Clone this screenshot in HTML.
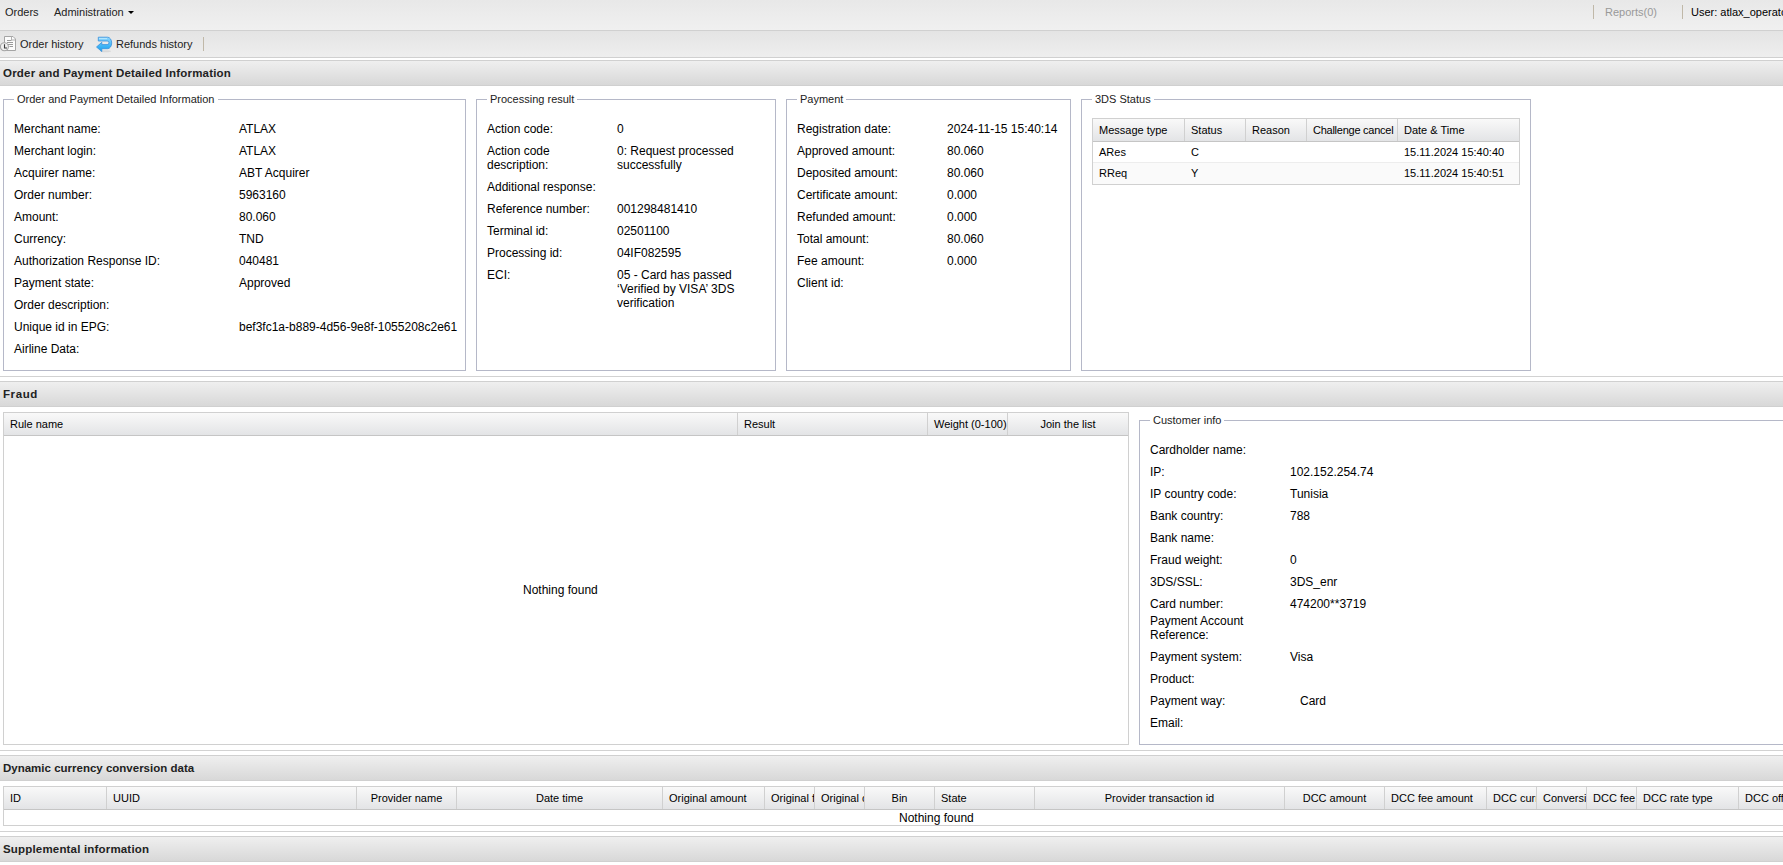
<!DOCTYPE html>
<html><head><meta charset="utf-8">
<style>
*{box-sizing:border-box;margin:0;padding:0}
html,body{width:1783px;height:865px;overflow:hidden;background:#fff;font-family:"Liberation Sans",sans-serif;color:#000}
.a{position:absolute;white-space:nowrap}
#menubar{position:absolute;left:0;top:0;width:1783px;height:31px;background:linear-gradient(#e8e8e8,#f0f0f0);border-bottom:1px solid #d0d0d0}
#toolbar{position:absolute;left:0;top:31px;width:1783px;height:27px;background:linear-gradient(#e4e4e4,#eeeeee);border-bottom:1px solid #d0d0d0}
.ph{position:absolute;left:0;width:1783px;height:26px;background:linear-gradient(#efefef,#d8d8d8);border-top:1px solid #d0d0d0;border-bottom:1px solid #d0d0d0;font-weight:bold;font-size:11.5px;color:#222}
.ph span{position:absolute;left:3px;top:6px}
.sepline{position:absolute;left:0;width:1783px;height:1px;background:#d2d2d2}
.fs{position:absolute;border:1px solid #b5b8c8}
.lg{position:absolute;top:-8px;background:#fff;font-size:11px;color:#222;padding:0 3px;line-height:14px}
.r{position:absolute;font-size:12px;line-height:14px;white-space:nowrap}
.grid{position:absolute;border:1px solid #d0d0d0;background:#fff;overflow:hidden}
.gh{position:absolute;left:0;top:0;height:23px;background:linear-gradient(#f9f9f9,#e3e4e6);border-bottom:1px solid #c5c5c5;font-size:11px;white-space:nowrap;overflow:hidden}
.gc{position:absolute;top:0;height:22px;border-right:1px solid #d0d0d0;padding-left:6px;overflow:hidden;line-height:22px;color:#000}
.gc.c{text-align:center;padding-left:0}
.cell{position:absolute;font-size:11px;line-height:14px;white-space:nowrap}
</style></head><body>

<div id="menubar">
  <div class="a" style="left:5px;top:6px;font-size:11px;color:#222">Orders</div>
  <div class="a" style="left:54px;top:6px;font-size:11px;color:#222">Administration</div>
  <div class="a" style="left:128px;top:11px;width:0;height:0;border-left:3px solid transparent;border-right:3px solid transparent;border-top:3px solid #000"></div>
  <div class="a" style="left:1593px;top:5px;width:1px;height:14px;background:#c0b8a8"></div>
  <div class="a" style="left:1605px;top:6px;font-size:11px;color:#999">Reports(0)</div>
  <div class="a" style="left:1682px;top:5px;width:1px;height:14px;background:#c0b8a8"></div>
  <div class="a" style="left:1691px;top:6px;font-size:11px;color:#000">User: atlax_operator</div>
</div>

<div id="toolbar">
  <svg class="a" style="left:0;top:4px" width="18" height="18" viewBox="0 0 18 18">
    <path d="M4.5 1.5 H13 L15.5 4 V15.5 H4.5 Z" fill="#fcfcfc" stroke="#a5a5a5" stroke-width="1"/>
    <path d="M11.5 1.5 V5 H15.5" fill="none" stroke="#b0b0b0" stroke-width="1"/>
    <path d="M7 5.5 H11.5 M7 7.5 H13 M8 9.5 H13 M9.5 11.5 H13" stroke="#9a9a9a" stroke-width="1"/>
    <circle cx="4.4" cy="11.7" r="4" fill="#f0f0f0" stroke="#a5a5a5" stroke-width="1.1"/>
    <path d="M4.5 9.2 V13 H7" fill="none" stroke="#3a3a3a" stroke-width="1.1"/>
  </svg>
  <div class="a" style="left:20px;top:7px;font-size:11px;color:#222">Order history</div>
  <svg class="a" style="left:95px;top:5px" width="18" height="17" viewBox="0 0 18 17">
    <defs><linearGradient id="bg1" x1="0" y1="0" x2="0" y2="1"><stop offset="0" stop-color="#8cd6ff"/><stop offset="0.55" stop-color="#48b8f6"/><stop offset="1" stop-color="#14a0ee"/></linearGradient></defs>
    <ellipse cx="10.5" cy="15.2" rx="5.5" ry="1" fill="#000" opacity="0.08"/>
    <path d="M3.3 1.2 H12.6 A4.1 5.75 0 0 1 12.6 12.7 H6.8 V15.6 L1.5 11 L6.8 6.3 V8.6 H12.2 A1.8 1.8 0 0 0 12.2 5 H3.3 Z" fill="url(#bg1)" stroke="#3a90dc" stroke-width="0.8" stroke-linejoin="round"/>
    <path d="M4 2.6 H12" stroke="#c8efff" stroke-width="1.2" opacity="0.7"/>
  </svg>
  <div class="a" style="left:116px;top:7px;font-size:11px;color:#222">Refunds history</div>
  <div class="a" style="left:203px;top:6px;width:1px;height:14px;background:#c0b8a8"></div>
</div>

<div class="ph" style="top:60px;"><span style="letter-spacing:0.2px">Order and Payment Detailed Information</span></div>

<div class="fs" style="left:3px;top:99px;width:463px;height:272px">
  <div class="lg" style="left:10px">Order and Payment Detailed Information</div>
</div>
<div class="fs" style="left:476px;top:99px;width:300px;height:272px">
  <div class="lg" style="left:10px">Processing result</div>
</div>
<div class="fs" style="left:786px;top:99px;width:285px;height:272px">
  <div class="lg" style="left:10px">Payment</div>
</div>
<div class="fs" style="left:1081px;top:99px;width:450px;height:272px">
  <div class="lg" style="left:10px">3DS Status</div>
</div>

<!-- 3DS grid -->
<div class="grid" style="left:1092px;top:118px;width:428px;height:67px">
  <div class="gh" style="width:426px">
    <div class="gc" style="left:0;width:92px">Message type</div>
    <div class="gc" style="left:92px;width:61px">Status</div>
    <div class="gc" style="left:153px;width:61px">Reason</div>
    <div class="gc" style="left:214px;width:91px;letter-spacing:-0.25px">Challenge cancel</div>
    <div class="gc" style="left:305px;width:121px;border-right:0">Date &amp; Time</div>
  </div>
  <div class="a" style="left:0;top:23px;width:426px;height:21px;border-bottom:1px solid #ededed;background:#fff"></div>
  <div class="a" style="left:0;top:44px;width:426px;height:21px;background:#fafafa"></div>
  <div class="cell" style="left:6px;top:26px">ARes</div>
  <div class="cell" style="left:98px;top:26px">C</div>
  <div class="cell" style="left:311px;top:26px">15.11.2024 15:40:40</div>
  <div class="cell" style="left:6px;top:47px">RReq</div>
  <div class="cell" style="left:98px;top:47px">Y</div>
  <div class="cell" style="left:311px;top:47px">15.11.2024 15:40:51</div>
</div>

<div class="sepline" style="top:376px"></div>
<div class="ph" style="top:381px;"><span style="letter-spacing:0.6px">Fraud</span></div>

<div class="grid" style="left:3px;top:412px;width:1126px;height:333px">
  <div class="gh" style="width:1124px">
    <div class="gc" style="left:0;width:734px">Rule name</div>
    <div class="gc" style="left:734px;width:190px">Result</div>
    <div class="gc" style="left:924px;width:80px">Weight (0-100)</div>
    <div class="gc c" style="left:1004px;width:120px;border-right:0">Join the list</div>
  </div>
  <div class="a" style="left:519px;top:170px;font-size:12px">Nothing found</div>
</div>
<div class="fs" style="left:1139px;top:420px;width:660px;height:325px">
  <div class="lg" style="left:10px">Customer info</div>
</div>

<div class="sepline" style="top:750px"></div>
<div class="ph" style="top:755px;"><span style="letter-spacing:0px">Dynamic currency conversion data</span></div>
<div class="grid" style="left:3px;top:786px;width:1800px;height:40px">
  <div class="gh" style="width:1800px">
    <div class="gc" style="left:0;width:103px">ID</div>
    <div class="gc" style="left:103px;width:250px">UUID</div>
    <div class="gc c" style="left:353px;width:100px">Provider name</div>
    <div class="gc c" style="left:453px;width:206px">Date time</div>
    <div class="gc" style="left:659px;width:102px">Original amount</div>
    <div class="gc" style="left:761px;width:50px">Original fee</div>
    <div class="gc" style="left:811px;width:50px">Original currency</div>
    <div class="gc c" style="left:861px;width:70px">Bin</div>
    <div class="gc" style="left:931px;width:100px">State</div>
    <div class="gc c" style="left:1031px;width:250px">Provider transaction id</div>
    <div class="gc c" style="left:1281px;width:100px">DCC amount</div>
    <div class="gc" style="left:1381px;width:102px">DCC fee amount</div>
    <div class="gc" style="left:1483px;width:50px">DCC currency</div>
    <div class="gc" style="left:1533px;width:50px">Conversion</div>
    <div class="gc" style="left:1583px;width:50px">DCC fee</div>
    <div class="gc" style="left:1633px;width:102px">DCC rate type</div>
    <div class="gc" style="left:1735px;width:100px">DCC offer</div>
  </div>
  <div class="a" style="left:895px;top:24px;font-size:12px;line-height:14px">Nothing found</div>
</div>

<div class="sepline" style="top:831px"></div>
<div class="ph" style="top:836px;"><span style="letter-spacing:0.18px">Supplemental information</span></div>

<div class="r" style="left:14px;top:122px">Merchant name:</div>
<div class="r" style="left:239px;top:122px">ATLAX</div>
<div class="r" style="left:14px;top:144px">Merchant login:</div>
<div class="r" style="left:239px;top:144px">ATLAX</div>
<div class="r" style="left:14px;top:166px">Acquirer name:</div>
<div class="r" style="left:239px;top:166px">ABT Acquirer</div>
<div class="r" style="left:14px;top:188px">Order number:</div>
<div class="r" style="left:239px;top:188px">5963160</div>
<div class="r" style="left:14px;top:210px">Amount:</div>
<div class="r" style="left:239px;top:210px">80.060</div>
<div class="r" style="left:14px;top:232px">Currency:</div>
<div class="r" style="left:239px;top:232px">TND</div>
<div class="r" style="left:14px;top:254px">Authorization Response ID:</div>
<div class="r" style="left:239px;top:254px">040481</div>
<div class="r" style="left:14px;top:276px">Payment state:</div>
<div class="r" style="left:239px;top:276px">Approved</div>
<div class="r" style="left:14px;top:298px">Order description:</div>
<div class="r" style="left:14px;top:320px">Unique id in EPG:</div>
<div class="r" style="left:239px;top:320px">bef3fc1a-b889-4d56-9e8f-1055208c2e61</div>
<div class="r" style="left:14px;top:342px">Airline Data:</div>
<div class="r" style="left:487px;top:122px">Action code:</div>
<div class="r" style="left:617px;top:122px">0</div>
<div class="r" style="left:487px;top:144px">Action code<br>description:</div>
<div class="r" style="left:617px;top:144px">0: Request processed<br>successfully</div>
<div class="r" style="left:487px;top:180px">Additional response:</div>
<div class="r" style="left:487px;top:202px">Reference number:</div>
<div class="r" style="left:617px;top:202px">001298481410</div>
<div class="r" style="left:487px;top:224px">Terminal id:</div>
<div class="r" style="left:617px;top:224px">02501100</div>
<div class="r" style="left:487px;top:246px">Processing id:</div>
<div class="r" style="left:617px;top:246px">04IF082595</div>
<div class="r" style="left:487px;top:268px">ECI:</div>
<div class="r" style="left:617px;top:268px">05 - Card has passed<br>‘Verified by VISA’ 3DS<br>verification</div>
<div class="r" style="left:797px;top:122px">Registration date:</div>
<div class="r" style="left:947px;top:122px">2024-11-15 15:40:14</div>
<div class="r" style="left:797px;top:144px">Approved amount:</div>
<div class="r" style="left:947px;top:144px">80.060</div>
<div class="r" style="left:797px;top:166px">Deposited amount:</div>
<div class="r" style="left:947px;top:166px">80.060</div>
<div class="r" style="left:797px;top:188px">Certificate amount:</div>
<div class="r" style="left:947px;top:188px">0.000</div>
<div class="r" style="left:797px;top:210px">Refunded amount:</div>
<div class="r" style="left:947px;top:210px">0.000</div>
<div class="r" style="left:797px;top:232px">Total amount:</div>
<div class="r" style="left:947px;top:232px">80.060</div>
<div class="r" style="left:797px;top:254px">Fee amount:</div>
<div class="r" style="left:947px;top:254px">0.000</div>
<div class="r" style="left:797px;top:276px">Client id:</div>
<div class="r" style="left:1150px;top:443px">Cardholder name:</div>
<div class="r" style="left:1150px;top:465px">IP:</div>
<div class="r" style="left:1290px;top:465px">102.152.254.74</div>
<div class="r" style="left:1150px;top:487px">IP country code:</div>
<div class="r" style="left:1290px;top:487px">Tunisia</div>
<div class="r" style="left:1150px;top:509px">Bank country:</div>
<div class="r" style="left:1290px;top:509px">788</div>
<div class="r" style="left:1150px;top:531px">Bank name:</div>
<div class="r" style="left:1150px;top:553px">Fraud weight:</div>
<div class="r" style="left:1290px;top:553px">0</div>
<div class="r" style="left:1150px;top:575px">3DS/SSL:</div>
<div class="r" style="left:1290px;top:575px">3DS_enr</div>
<div class="r" style="left:1150px;top:597px">Card number:</div>
<div class="r" style="left:1290px;top:597px">474200**3719</div>
<div class="r" style="left:1150px;top:614px">Payment Account<br>Reference:</div>
<div class="r" style="left:1150px;top:650px">Payment system:</div>
<div class="r" style="left:1290px;top:650px">Visa</div>
<div class="r" style="left:1150px;top:672px">Product:</div>
<div class="r" style="left:1150px;top:694px">Payment way:</div>
<div class="r" style="left:1300px;top:694px">Card</div>
<div class="r" style="left:1150px;top:716px">Email:</div>
</body></html>
